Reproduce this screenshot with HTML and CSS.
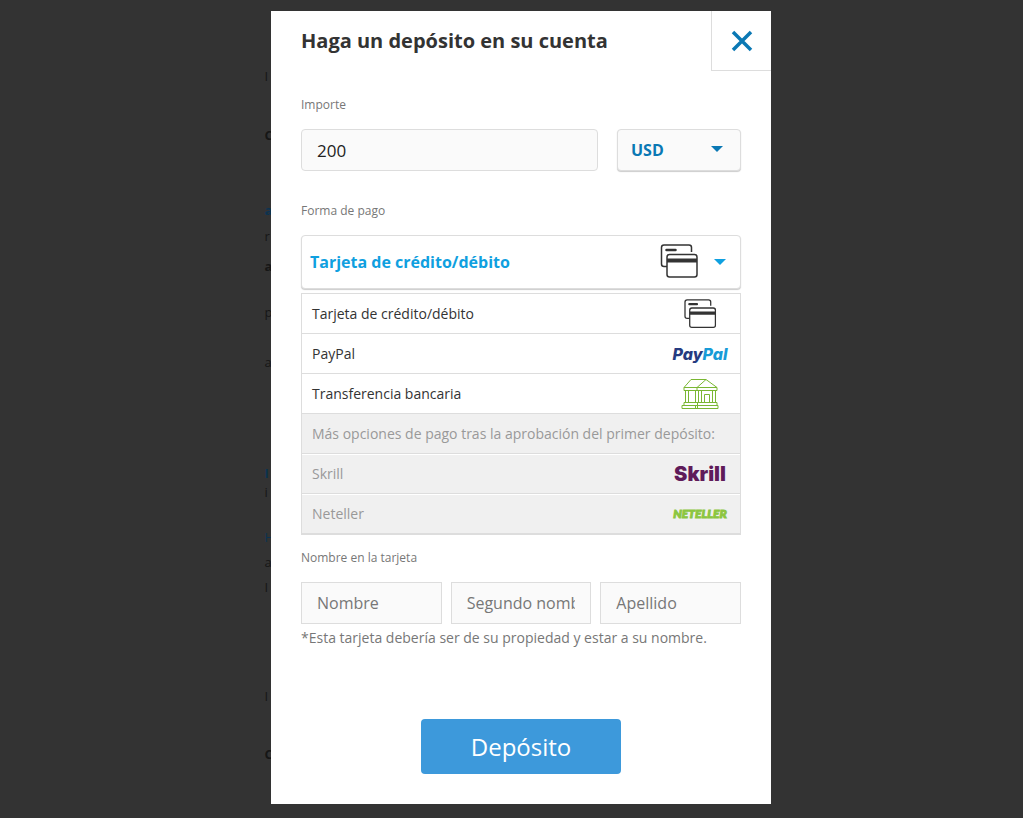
FILE: index.html
```html
<!DOCTYPE html>
<html lang="es">
<head>
    <meta charset="UTF-8">
    <meta name="viewport" content="width=device-width, initial-scale=1.0">
    <title>Haga un depósito en su cuenta</title>
    <link rel="stylesheet" href="styles.css">
</head>
<body>
    <svg width="0" height="0" class="sprite" aria-hidden="true">
        <symbol id="cards" viewBox="0 0 38 35">
            <path d="M8 22.500H4Q1.500 22.500 1.500 20V3.500Q1.500 1 4 1H29Q31.500 1 31.500 3.500V8" fill="none" stroke="#333" stroke-width="1.500"/>
            <path d="M6.500 6H15.500" stroke="#333" stroke-width="2.500" stroke-linecap="round"/>
            <rect x="7" y="10.500" width="30" height="22.500" rx="2.500" fill="#fff" stroke="#333" stroke-width="1.500"/>
            <path d="M7 16.500H37" stroke="#333" stroke-width="4"/>
        </symbol>
    </svg>

    <!-- Page under the overlay -->
    <div class="page-edge" aria-hidden="true">
        <span>I</span>
        <span class="bold">C</span>
        <span class="blue bold">a</span>
        <span>r</span>
        <span class="bold">a</span>
        <span>p</span>
        <span>a</span>
        <span class="blue bold">I</span>
        <span>i</span>
        <span class="blue">H</span>
        <span>a</span>
        <span>I</span>
        <span>I</span>
        <span class="bold">C</span>
    </div>

    <div class="overlay">
        <main class="modal" role="dialog" aria-labelledby="title">
            <header class="modal-header">
                <h1 id="title">Haga un depósito en su cuenta</h1>
                <button type="button" class="close" aria-label="Cerrar">
                    <svg width="22" height="22" viewBox="0 0 22 22"><path d="M2 2L20 20M20 2L2 20" stroke="#0a78b4" stroke-width="3.500"/></svg>
                </button>
            </header>

            <form class="modal-body">
                <label class="label" for="amount">Importe</label>
                <div class="amount-row">
                    <input type="text" id="amount" class="field amount" value="200">
                    <div class="currency">
                        <select aria-label="Moneda">
                            <option>USD</option>
                        </select>
                        <svg class="arrow" width="12" height="6" viewBox="0 0 12 6"><path d="M0 0H12L6 6Z" fill="#0a78b4"/></svg>
                    </div>
                </div>

                <span class="label" id="methodLabel">Forma de pago</span>
                <button type="button" class="method" aria-haspopup="listbox" aria-expanded="true" aria-labelledby="methodLabel methodValue">
                    <span id="methodValue">Tarjeta de crédito/débito</span>
                    <svg class="method-icon" width="38" height="36" viewBox="0 0 38 36"><use href="#cards" width="38" height="35"/></svg>
                    <svg width="12" height="6" viewBox="0 0 12 6"><path d="M0 0H12L6 6Z" fill="#0fa0e0"/></svg>
                </button>

                <ul class="options" role="listbox" aria-labelledby="methodLabel">
                    <li role="option" aria-selected="true">
                        <span>Tarjeta de crédito/débito</span>
                        <span class="logo"><svg width="34" height="30" viewBox="0 0 38 35"><use href="#cards" width="38" height="35"/></svg></span>
                    </li>
                    <li role="option">
                        <span>PayPal</span>
                        <span class="logo paypal"><span class="pay">Pay</span><span class="pal">Pal</span></span>
                    </li>
                    <li role="option">
                        <span>Transferencia bancaria</span>
                        <span class="logo">
                            <svg width="38" height="32" viewBox="0 0 38 32" fill="none" stroke="#7ab733" stroke-width="1">
                                <path d="M3 9.500L10 1.500H25L36 9.500V12.500H3ZM3 9.500H36M16 9.500L25 1.500M16 9.500V12.500"/>
                                <path d="M4.500 12.500V24.500M7.500 12.500V24.500M14.500 12.500V24.500M17.500 12.500V24.500M20.500 12.500V24.500M31.500 12.500V24.500M34.500 12.500V24.500"/>
                                <path d="M23.500 24.500V16.500H28.500V24.500"/>
                                <path d="M3 24.500H36V27.500H3ZM1 27.500H37V30.500H1ZM16.500 24.500V30.500M14.500 27.500V30.500"/>
                            </svg>
                        </span>
                    </li>
                    <li class="disabled" role="option" aria-disabled="true">
                        <span>Más opciones de pago tras la aprobación del primer depósito:</span>
                    </li>
                    <li class="disabled" role="option" aria-disabled="true">
                        <span>Skrill</span>
                        <span class="logo skrill">Skrill</span>
                    </li>
                    <li class="disabled" role="option" aria-disabled="true">
                        <span>Neteller</span>
                        <span class="logo neteller">NETELLER</span>
                    </li>
                </ul>

                <label class="label" for="firstName">Nombre en la tarjeta</label>
                <div class="name-row">
                    <input type="text" id="firstName" class="field" placeholder="Nombre">
                    <input type="text" class="field" placeholder="Segundo nombre" aria-label="Segundo nombre">
                    <input type="text" class="field" placeholder="Apellido" aria-label="Apellido">
                </div>
                <p class="note">*Esta tarjeta debería ser de su propiedad y estar a su nombre.</p>

                <button type="submit" class="submit">Depósito</button>
            </form>
        </main>
    </div>
</body>
</html>
```
FILE: styles.css
```css
* {
    box-sizing: border-box;
}

body {
    margin: 0;
    min-height: 100vh;
    background-color: #333;
    font-family: 'Open Sans', sans-serif;
    color: #333;
    position: relative;
}

.sprite {
    position: absolute;
}

/* Page under the overlay */
.page-edge {
    position: absolute;
    top: 66px;
    left: calc(50% - 247px);
    display: grid;
    grid-template-rows: 59px 75px 26px 30px 46px 50px 111px 19px 45px 25px 25px 109px 58px 20px;
    font-size: 13px;
    line-height: 20px;
    color: #161616;
}

.page-edge .bold {
    font-weight: bold;
}

.page-edge .blue {
    color: #0c3350;
}

.overlay {
    position: relative;
    padding: 11px 0 14px 19px;
}

.modal {
    max-width: 500px;
    margin: 0 auto;
    background-color: #fff;
}

.modal-header {
    display: flex;
    justify-content: space-between;
    align-items: center;
    padding-left: 30px;
}

h1 {
    margin: 0;
    font-size: 20px;
    line-height: 28px;
    font-weight: bold;
}

.close {
    display: flex;
    justify-content: center;
    align-items: center;
    width: 60px;
    height: 60px;
    padding: 0;
    background: none;
    border: solid #ddd;
    border-width: 0 0 1px 1px;
    cursor: pointer;
}

.modal-body {
    padding: 26px 30px 30px;
}

.label {
    display: block;
    margin-bottom: 16px;
    font-size: 12px;
    line-height: 16px;
    color: #777;
}

.field {
    width: 100%;
    min-width: 0;
    height: 42px;
    padding: 0 15px;
    border: 1px solid #ddd;
    background-color: #fafafa;
    font-family: inherit;
    font-size: 16px;
    color: #222;
}

.field::placeholder {
    color: #777;
}

.amount-row {
    display: grid;
    grid-template-columns: 1fr 124px;
    gap: 19px;
    margin-bottom: 32px;
}

.amount {
    border-radius: 4px;
    font-size: 17px;
}

.currency {
    position: relative;
}

.currency select {
    appearance: none;
    width: 100%;
    height: 42px;
    padding: 0 13px;
    border: 1px solid #ddd;
    border-radius: 4px;
    box-shadow: 0 1px 1px #ccc;
    background-color: #fafafa;
    font-family: inherit;
    font-size: 16px;
    font-weight: bold;
    color: #0a78b4;
}

.currency .arrow {
    position: absolute;
    top: 17px;
    right: 18px;
    pointer-events: none;
}

.method {
    display: flex;
    align-items: center;
    width: 100%;
    height: 54px;
    padding: 0 14px 0 8px;
    border: 1px solid #ddd;
    border-radius: 4px;
    box-shadow: 0 1px 1px #ccc;
    background-color: #fff;
    font-family: inherit;
    font-size: 16px;
    font-weight: bold;
    color: #0fa0e0;
    cursor: pointer;
}

.method-icon {
    margin: 0 16px 0 auto;
}

.options {
    margin: 4px 0 15px;
    padding: 0;
    list-style: none;
    border: 1px solid #ddd;
    border-bottom-width: 2px;
}

.options li {
    display: flex;
    justify-content: space-between;
    align-items: center;
    height: 40px;
    padding: 0 10px;
    border-bottom: 1px solid #ddd;
    font-size: 14px;
}

.options li:last-child {
    height: 39px;
    border-bottom: 0;
}

.options .disabled {
    background-color: #f0f0f0;
    color: #999;
}

.options .disabled + .disabled {
    box-shadow: inset 0 1px #fff;
}

.logo {
    display: flex;
    justify-content: center;
    width: 60px;
    line-height: 24px;
    white-space: nowrap;
}

.paypal {
    font-family: Inter, sans-serif;
    font-size: 16px;
    font-weight: 800;
    font-style: italic;
}

.pay {
    color: #253b80;
}

.pal {
    color: #179bd7;
}

.skrill {
    font-family: Inter, sans-serif;
    font-size: 20px;
    font-weight: 900;
    color: #5f1b5a;
}

.neteller {
    font-family: Lato, sans-serif;
    font-size: 12px;
    font-weight: 900;
    font-style: italic;
    color: #8cc63f;
    -webkit-text-stroke: 1px #8cc63f;
}

.name-row {
    display: grid;
    grid-template-columns: repeat(3, 1fr);
    gap: 9px;
}

.note {
    margin: 4px 0 71px;
    font-size: 14px;
    line-height: 20px;
    color: #777;
}

.submit {
    display: block;
    width: 200px;
    height: 55px;
    margin: 0 auto;
    border: 0;
    border-radius: 4px;
    background-color: #3d99db;
    font-family: inherit;
    font-size: 24px;
    color: #fff;
    cursor: pointer;
}
```
